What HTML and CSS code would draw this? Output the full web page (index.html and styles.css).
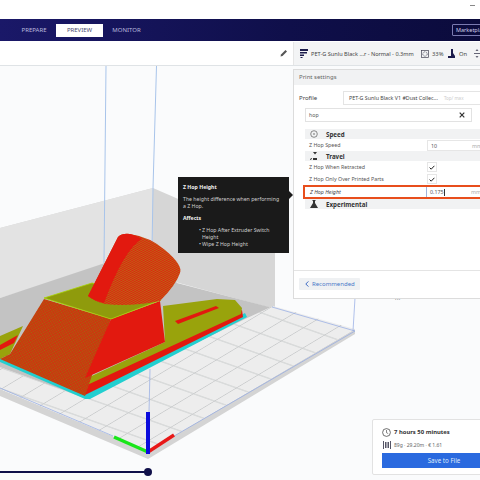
FILE: index.html
```html
<!DOCTYPE html>
<html lang="en">
<head>
  <meta charset="UTF-8">
  <title>Cura Preview</title>
  <link rel="stylesheet" href="styles.css">
</head>
<body>
  <div class="titlebar"><span class="min-btn"></span></div>

  <div class="nav">
    <span class="tab">PREPARE</span>
    <span class="tab active">PREVIEW</span>
    <span class="tab">MONITOR</span>
    <span class="market">Marketplace</span>
  </div>

  <div class="toolbar">
    <div class="tool-left">
      <svg class="pencil" width="8" height="8" viewBox="0 0 8 8"><path d="M0.5 7.5 L1 5.5 L5.5 1 L7 2.5 L2.5 7 Z" fill="#555"/></svg>
    </div>
    <div class="tool-right">
      <svg width="8" height="9" viewBox="0 0 8 9"><path d="M0 0h8v2H0zM0 3h7v1.6H0zM0 5.5h4v1.5H0zM0.5 8h2v1h-2z" fill="#1c1c4c"/></svg>
      <span class="tool-profile">PET-G Sunlu Black ...r - Normal - 0.3mm</span>
      <svg width="8" height="8" viewBox="0 0 8 8"><rect x="0.5" y="0.5" width="7" height="7" fill="none" stroke="#445" stroke-width="0.7"/><circle cx="4" cy="4" r="2.2" fill="none" stroke="#667" stroke-dasharray="1 0.7"/></svg>
      <span class="tool-text">33%</span>
      <svg width="7" height="9" viewBox="0 0 7 9"><path d="M3 0h2v4l2 3v2H0V7h3z" fill="#1c1c4c"/></svg>
      <span class="tool-text wide">On</span>
      <svg width="6" height="9" viewBox="0 0 6 9"><path d="M3 0l1.5 2h-3zM0 4h6v1H0zM3 9L1.5 7h3z" fill="#667"/></svg>
    </div>
  </div>

  <div class="viewport">
    <svg class="scene" width="480" height="415" viewBox="0 65 480 415">
      <defs>
        <pattern id="grid" width="10" height="10" patternUnits="userSpaceOnUse" patternTransform="matrix(2.2 -1.32 2.1 0.74 148 450)">
          <path d="M0 5H10M5 0V10" stroke="#cbcdce" stroke-width="0.45" fill="none"/>
        </pattern>
        <pattern id="dots" width="1.6" height="1.6" patternUnits="userSpaceOnUse" patternTransform="rotate(24)">
          <rect width="1.6" height="1.6" fill="#cf330f"/>
          <rect width="0.8" height="0.8" fill="#9a700e"/>
        </pattern>
        <pattern id="hatch" width="1.8" height="1.8" patternUnits="userSpaceOnUse" patternTransform="rotate(62)">
          <rect width="1.8" height="1.8" fill="#e0200f"/>
          <rect width="0.6" height="1.8" fill="#a88a18"/>
        </pattern>
      </defs>

      <!-- build volume walls and floor -->
      <polygon points="0,227 153,187 275,240 275,308 153,275" fill="#d6d6d6"/>
      <polygon points="0,227 153,187 153,250 0,297" fill="#e3e3e3"/>
      <polygon points="0,297 105,262 160,262 177,282 273,307 250,320 85,400 0,370" fill="#c3c3c3"/>

      <!-- plate -->
      <polygon points="0,388 148,450 355,328 355,333 148,458 0,395" fill="#d4d4d4"/>
      <polygon points="273,305 355,328 148,450 0,388 0,366 85,397 245,318" fill="#ededed"/>
      <polygon points="273,305 355,328 148,450 0,388 0,366 85,397 245,318" fill="url(#grid)"/>

      <!-- volume outline -->
      <g stroke="#a8c4ea" fill="none" stroke-width="1">
        <path d="M106 65 L104 262"/>
        <path d="M156.5 65 L153 187 L152 250"/>
      </g>
      <g stroke="#8fa8e4" fill="none" stroke-width="0.7">
        <path d="M0 387 L113 435"/>
        <path d="M150 449 L355 330 L272 306"/>
        <path d="M355 297 L353 330"/>
        <path d="M150 368 L149 412"/>
      </g>

      <!-- model -->
      <polygon points="0,361 85,398 90,398 247,316 245,312 86,393 0,357" fill="#22cfd0"/>
      <polygon points="0,352 85,394 243,316 242,309 85,383" fill="#e2190f"/>
      <polygon points="163,305 217,298 235,299 242,307 241,313 85,385 85,378 165,341" fill="#99a30c"/>
      <polygon points="175,320 216,305 219,307 178,323" fill="#e2190f"/>
      <polygon points="0,335 23,325 10,353 0,358" fill="#99a30c"/>
      <polygon points="0,344 18,334 14,342 0,349" fill="#e2190f"/>
      <polygon points="44,298 111,318 85,395 0,358 10,353" fill="url(#dots)"/>
      <polygon points="111,318 160,300 165,341 85,377" fill="#e2190f"/>
      <polygon points="44,297 92,282 161,299 111,318" fill="#8f9b0c" stroke="#a8d400" stroke-width="0.8"/>
      <path d="M88 295 L118 236 Q122 232 130 233 Q150 236 165 249 Q183 264 180 272 Q176 284 160 300 Q130 306 105 303 Q94 300 88 295 Z" fill="url(#hatch)"/>
      <path d="M88 295 L118 236 Q122 232 130 233 Q136 234 142 238 Q124 248 104 302 Q94 300 88 295 Z" fill="#e2190f"/>

      <!-- axes -->
      <line x1="148" y1="451" x2="114" y2="436" stroke="#19e619" stroke-width="3.4"/>
      <line x1="148" y1="451" x2="174" y2="434" stroke="#e81818" stroke-width="3.4"/>
      <line x1="148" y1="453" x2="148" y2="411" stroke="#0b0bdc" stroke-width="4"/>
    </svg>

    <div class="slider"><span class="knob"></span></div>

    <div class="tooltip">
      <div class="tip-title">Z Hop Height</div>
      <div class="tip-text">The height difference when performing a Z Hop.</div>
      <div class="tip-title">Affects</div>
      <ul class="tip-list">
        <li>Z Hop After Extruder Switch Height</li>
        <li>Wipe Z Hop Height</li>
      </ul>
    </div>

    <div class="panel">
      <div class="panel-head">Print settings</div>
      <div class="profile-row">
        <span class="profile-label">Profile</span>
        <div class="combo">PET-G Sunlu Black V1 #Dust Collec...<span class="combo-dim">Top/ max</span></div>
      </div>
      <div class="search">
        <span>hop</span>
        <svg width="6" height="6" viewBox="0 0 6 6"><path d="M0.7 0.7L5.3 5.3M5.3 0.7L0.7 5.3" stroke="#333" stroke-width="1.2"/></svg>
      </div>
      <div class="settings">
        <div class="cat">
          <svg width="8" height="8" viewBox="0 0 8 8"><circle cx="4" cy="4" r="3.3" fill="none" stroke="#444" stroke-width="0.6"/><circle cx="4" cy="4" r="0.7" fill="#444"/></svg>
          <span>Speed</span>
        </div>
        <div class="row">
          <span class="row-label">Z Hop Speed</span>
          <div class="field">10<span class="unit">mm/s</span></div>
        </div>
        <div class="cat">
          <svg width="8" height="8" viewBox="0 0 8 8"><path d="M3 0h4L5 2.5zM0 8l1-2h1l-1 2zM3 8V6h4v2z" fill="#333"/></svg>
          <span>Travel</span>
        </div>
        <div class="row">
          <span class="row-label">Z Hop When Retracted</span>
          <div class="check"><svg width="6" height="5" viewBox="0 0 6 5"><path d="M0.6 2.6L2.2 4.2L5.4 0.8" stroke="#222" stroke-width="1" fill="none"/></svg></div>
        </div>
        <div class="row">
          <span class="row-label">Z Hop Only Over Printed Parts</span>
          <div class="check"><svg width="6" height="5" viewBox="0 0 6 5"><path d="M0.6 2.6L2.2 4.2L5.4 0.8" stroke="#222" stroke-width="1" fill="none"/></svg></div>
        </div>
        <div class="row highlight">
          <span class="row-label">Z Hop Height</span>
          <div class="field focus">0.175<span class="caret"></span><span class="unit">mm</span></div>
        </div>
        <div class="cat">
          <svg width="8" height="8" viewBox="0 0 8 8"><path d="M2.5 0h3v1H5v2l3 5H0l3-5V1h-.5z" fill="#333"/></svg>
          <span>Experimental</span>
        </div>
      </div>
      <div class="panel-foot">
        <div class="back-btn">
          <svg width="4" height="6" viewBox="0 0 4 6"><path d="M3.4 0.4L0.8 3L3.4 5.6" stroke="#3d6bc4" stroke-width="1" fill="none"/></svg>
          Recommended
        </div>
      </div>
      <div class="grip">...</div>
    </div>

    <div class="estimate">
      <div class="est-time">
        <svg width="9" height="9" viewBox="0 0 9 9"><circle cx="4.5" cy="4.5" r="3.9" fill="none" stroke="#333" stroke-width="0.7"/><path d="M4.5 2V4.7L6.2 5.6" stroke="#333" stroke-width="0.6" fill="none"/></svg>
        7 hours 50 minutes
      </div>
      <div class="est-info">
        <svg width="8" height="8" viewBox="0 0 8 8"><path d="M0 0h1v8H0zM7 0h1v8H7zM2 1h1.5v6H2zM4.5 1H6v6H4.5z" fill="#556"/></svg>
        89g · 29.20m · € 1.61
      </div>
      <div class="save-btn">Save to File</div>
    </div>
  </div>
</body>
</html>
```

FILE: styles.css
```css
html, body { margin:0; padding:0; width:480px; height:480px; overflow:hidden; }
body { background:#fff; color:#333; font-family:"Noto Sans", sans-serif; font-size:5.5px; }

.titlebar { height:19px; display:flex; justify-content:flex-end; align-items:flex-start; }
.min-btn { width:5px; height:1px; background:#888; margin:5px 5px 0 0; }

.nav {
  height:22px; display:flex; align-items:center; padding-left:11px; gap:0;
  background:linear-gradient(to right,#1a1868,#0f0f4a 60%,#0b0b3c);
}
.tab { width:47px; height:13px; line-height:13px; text-align:center; color:#b9b9de; font-size:6px; margin-right:0; }
.tab.active { background:#fff; color:#4a4a70; margin:0 0 0 -1px; }
.tab:nth-child(1) { width:46px; }
.market {
  margin-left:auto; width:40px; height:10px; line-height:10px; padding-left:3px; margin-right:-17px;
  border:1px solid #7a7ab0; border-radius:1px; color:#d0d0e8; font-size:5.5px; flex-shrink:0;
}

.toolbar { height:24px; display:flex; background:#fff; border-bottom:1px solid #dfe3e6; }
.tool-left { width:293px; display:flex; justify-content:flex-end; align-items:center; padding-right:5px; box-sizing:border-box; }
.tool-right {
  flex:1; display:flex; align-items:center; gap:3px; margin-top:1px; padding-left:6px;
  background:#f3f4f5; border-left:1px solid #e6e6e6; white-space:nowrap; overflow:hidden;
}
.tool-profile { width:107px; font-size:5.6px; color:#444; }
.tool-text { font-size:5.8px; color:#444; width:12px; margin-right:1px; }
.tool-text.wide { width:9px; margin-left:1px; margin-right:3px; }

.viewport { position:relative; height:415px; background:#fafbfc; overflow:hidden; }
.scene { display:block; }

.slider { position:absolute; left:0; top:405px; width:148px; height:2px; background:#10104a; }
.knob { position:absolute; right:-4px; top:-3px; width:8px; height:8px; border-radius:50%; background:#10104a; }

.tooltip {
  position:absolute; left:178px; top:111px; width:111px; height:76px; box-sizing:border-box;
  padding:7px 5px 0; background:#1a1a1a; color:#d0d0d0; font-size:5.2px; line-height:7px;
}
.tooltip::after {
  content:""; position:absolute; right:-4px; top:14px;
  border-left:4px solid #1a1a1a; border-top:4px solid transparent; border-bottom:4px solid transparent;
}
.tip-title { font-weight:bold; color:#f2f2f2; }
.tip-text { margin:5px 3px 5px 0; }
.tip-list { margin:5px 0 0; padding:0 0 0 19px; list-style:none; }
.tip-list li { position:relative; }
.tip-list li::before { content:"•"; position:absolute; left:-3px; }

.panel {
  position:absolute; left:293px; top:3px; width:194px; height:230px; box-sizing:border-box;
  display:flex; flex-direction:column;
  background:#fff; border:1px solid #dcdcdc; font-size:5.3px;
}
.panel-head { height:15px; line-height:15px; padding-left:5px; background:#f1f2f3; color:#666; font-size:6px; flex-shrink:0; }
.profile-row { display:flex; align-items:center; margin-top:6px; padding-left:5px; height:13px; }
.profile-label { width:44px; font-size:6px; color:#444; }
.combo { flex:1; height:12px; line-height:12px; padding-left:5px; border:1px solid #e4e4e4; color:#444; white-space:nowrap; overflow:hidden; }
.combo-dim { margin-left:6px; color:#ccc; font-size:4.5px; }
.search {
  display:flex; justify-content:space-between; align-items:center; box-sizing:border-box;
  width:167px; height:14px; margin:4px 0 0 11px; padding:0 6px 0 3px;
  border:1px solid #e2e2e2; color:#555;
}
.settings { margin-top:7px; }
.cat {
  display:flex; align-items:center; gap:8px; height:10px; margin-left:11px; padding-left:5px;
  background:#f1f2f3; color:#333; font-size:6.2px; font-weight:bold;
}
.row { display:flex; align-items:center; height:12px; margin-left:15px; color:#555; }
.row-label { width:118px; }
.field {
  position:relative; flex:1; height:11px; line-height:11px; padding-left:3px; box-sizing:border-box;
  border:1px solid #e6e6e6; color:#555;
}
.unit { position:absolute; left:44px; color:#aaa; }
.check { width:10px; height:10px; display:flex; align-items:center; justify-content:center; border:1px solid #e6e6e6; box-sizing:border-box; }
.highlight {
  height:14px; margin:0 0 0 9px; padding-left:5px; box-sizing:border-box;
  border:2px solid #e84e1c; font-style:italic; color:#444;
}
.highlight .row-label { width:116px; }
.field.focus { font-style:normal; border:none; border-left:1px solid #9fb4dc; height:10px; line-height:10px; }
.caret { display:inline-block; width:0.6px; height:7px; background:#333; vertical-align:middle; }

.panel-foot { margin-top:auto; height:28px; box-sizing:border-box; padding:7px 0 0 5px; border-top:1px solid #e4e4e4; }
.back-btn {
  display:flex; align-items:center; gap:3px; width:61px; height:12px; box-sizing:border-box; padding-left:6px;
  background:#eff1f3; color:#4a78c8; font-size:6px; border-radius:1px;
}
.grip { position:absolute; left:101px; bottom:-3px; line-height:5px; color:#666; letter-spacing:0.5px; }

.estimate {
  position:absolute; left:372px; top:353px; width:120px; height:56px; box-sizing:border-box;
  padding:7px 0 0 9px; background:#fff; border:1px solid #e2e2e2; border-radius:2px;
}
.est-time { display:flex; align-items:center; gap:3px; height:10px; font-size:5.9px; font-weight:bold; color:#333; }
.est-info { display:flex; align-items:center; gap:3px; height:10px; margin-top:3px; padding-left:1px; font-size:5px; color:#666; }
.save-btn { width:124px; height:15px; line-height:15px; margin-top:3px; text-align:center; background:#2a6adf; color:#dfe9fb; font-size:6.2px; }
```
